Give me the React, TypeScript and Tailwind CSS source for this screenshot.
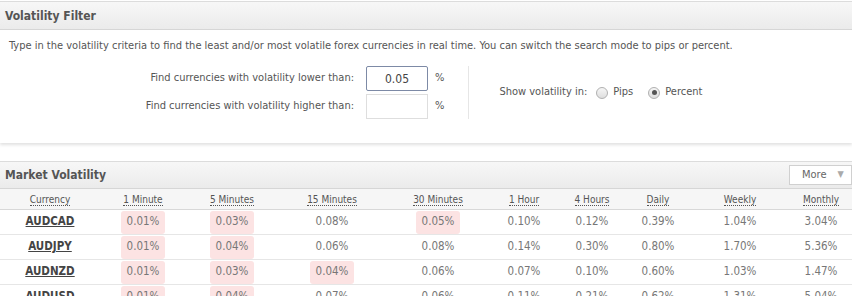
import React from 'react';

type Row = { pair: string; values: string[]; hot: number[] };

const columns = ['Currency', '1 Minute', '5 Minutes', '15 Minutes', '30 Minutes', '1 Hour', '4 Hours', 'Daily', 'Weekly', 'Monthly'];

const rows: Row[] = [
  { pair: 'AUDCAD', values: ['0.01%', '0.03%', '0.08%', '0.05%', '0.10%', '0.12%', '0.39%', '1.04%', '3.04%'], hot: [0, 1, 3] },
  { pair: 'AUDJPY', values: ['0.01%', '0.04%', '0.06%', '0.08%', '0.14%', '0.30%', '0.80%', '1.70%', '5.36%'], hot: [0, 1] },
  { pair: 'AUDNZD', values: ['0.01%', '0.03%', '0.04%', '0.06%', '0.07%', '0.10%', '0.60%', '1.03%', '1.47%'], hot: [0, 1, 2] },
  { pair: 'AUDUSD', values: ['0.01%', '0.04%', '0.07%', '0.06%', '0.11%', '0.21%', '0.62%', '1.31%', '5.04%'], hot: [0, 1] },
];

const gridCols = 'grid grid-cols-[100px_86px_92px_108px_104px_68px_68px_64px_100px_62px]';

const Radio = ({ checked }: { checked?: boolean }) => (
  <span className="w-[12px] h-[12px] rounded-full border border-[#b0b0b0] bg-gradient-to-b from-[#f6f6f6] to-[#dedede] flex items-center justify-center">
    {checked && <span className="w-[5px] h-[5px] rounded-full bg-[#555]" />}
  </span>
);

const App: React.FC = () => {
  return (
    <div className="w-[852px] h-[296px] overflow-hidden bg-white font-['DejaVu_Sans_Condensed','Liberation_Sans',sans-serif] text-[#555]">
      {/* filter panel */}
      <div className="border-t border-[#dcdcdc] mt-[1px] shadow-[0_2px_3px_rgba(0,0,0,0.12)]">
        <div className="h-[28px] flex items-center pl-[5px] bg-gradient-to-b from-[#f7f7f7] to-[#ebebeb] border-b border-[#d6d6d6]">
          <span className="text-[12px] font-bold text-[#555]">Volatility Filter</span>
        </div>
        <div className="pt-[8px] pb-[24px]">
          <p className="pl-[9px] text-[11px] leading-[16px] whitespace-nowrap">
            Type in the volatility criteria to find the least and/or most volatile forex currencies in real time. You can switch the search mode to pips or percent.
          </p>
          <div className="flex items-center mt-[12px]">
            <div className="flex flex-col gap-[3px] pl-[134px] pr-[24px] border-r border-[#e6e6e6]">
              <div className="flex items-center">
                <span className="w-[220px] text-right text-[11px] whitespace-nowrap">Find currencies with volatility lower than:</span>
                <span className="ml-[12px] w-[62px] h-[25px] border border-[#7d8aa6] rounded-[2px] flex items-center justify-center text-[12px] text-[#444]">0.05</span>
                <span className="ml-[7px] text-[11px]">%</span>
              </div>
              <div className="flex items-center">
                <span className="w-[220px] text-right text-[11px] whitespace-nowrap">Find currencies with volatility higher than:</span>
                <span className="ml-[12px] w-[62px] h-[25px] border border-[#dedede]" />
                <span className="ml-[7px] text-[11px]">%</span>
              </div>
            </div>
            <div className="flex items-center pl-[30px] text-[11px]">
              <span>Show volatility in:</span>
              <span className="ml-[9px]"><Radio /></span>
              <span className="ml-[5px]">Pips</span>
              <span className="ml-[15px]"><Radio checked /></span>
              <span className="ml-[5px]">Percent</span>
            </div>
          </div>
        </div>
      </div>

      {/* market volatility panel */}
      <div className="mt-[18px] border-t border-[#dcdcdc]">
        <div className="h-[27px] flex items-center justify-between pl-[5px] bg-gradient-to-b from-[#f7f7f7] to-[#ebebeb] border-b border-[#d6d6d6]">
          <span className="text-[12px] font-bold text-[#555]">Market Volatility</span>
          <div className="w-[63px] h-[20px] bg-white border border-[#d0d0d0] flex items-center pl-[12px] text-[11px] text-[#666]">
            More
            <span className="ml-[11px] text-[9px] text-[#aaa]">▼</span>
          </div>
        </div>
        <div className={`${gridCols} h-[21px] items-center bg-[#f6f6f6] border-b border-[#d8d8d8] text-[10px]`}>
          {columns.map((c) => (
            <div key={c} className="text-center">
              <span className="border-b border-dotted border-[#555]">{c}</span>
            </div>
          ))}
        </div>
        {rows.map((r) => (
          <div key={r.pair} className={`${gridCols} h-[25px] items-center border-b border-[#e6e6e6] text-[11.5px]`}>
            <div className="text-center font-bold text-[#444] underline">{r.pair}</div>
            {r.values.map((v, i) => (
              <div key={i} className="flex justify-center">
                <span className={`h-[23px] flex items-center px-[6px] rounded-[3px] text-[#777] ${r.hot.includes(i) ? 'bg-[#fce3e3]' : ''}`}>{v}</span>
              </div>
            ))}
          </div>
        ))}
      </div>
    </div>
  );
};

export default App;
